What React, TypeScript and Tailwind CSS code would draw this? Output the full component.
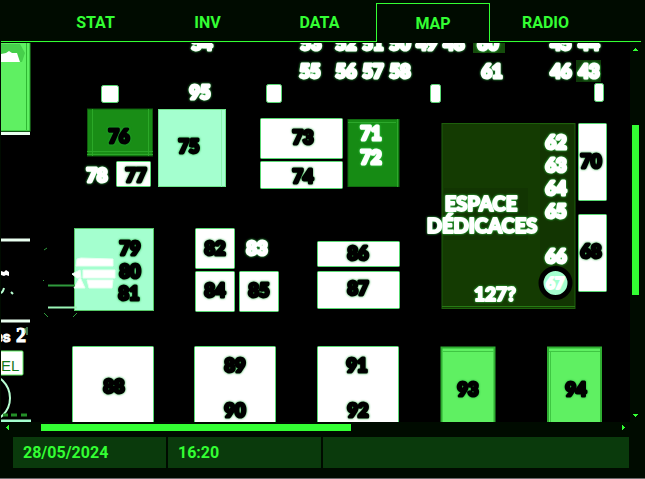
import React, { useState } from "react";

const TABS = ["STAT", "INV", "DATA", "MAP", "RADIO"];

type Label = [text: string, x: number, y: number];

// Booth boxes: x, y, width, height
const WHITE_BOXES: number[][] = [
  [116, 161, 35, 26],
  [260, 118, 83, 41],
  [260, 161, 83, 28],
  [578, 123, 29, 78],
  [578, 214, 29, 78],
  [195, 228, 40, 41],
  [195, 271, 40, 41],
  [239, 271, 40, 41],
  [317, 241, 83, 26],
  [317, 271, 83, 38],
  [72, 346, 82, 90],
  [194, 346, 82, 90],
  [317, 346, 82, 90],
];

const PILLARS: number[][] = [
  [101, 85, 18, 18],
  [266, 84, 16, 19],
  [430, 84, 11, 19],
  [594, 83, 10, 19],
];

const WHITE_LABELS: Label[] = [
  ["54", 202, 50],
  ["53", 311, 50],
  ["52", 346, 50],
  ["51", 373, 50],
  ["50", 400, 50],
  ["49", 427, 50],
  ["48", 454, 50],
  ["60", 488, 50],
  ["45", 561, 50],
  ["44", 589, 50],
  ["55", 310, 78],
  ["56", 346, 78],
  ["57", 373, 78],
  ["58", 400, 78],
  ["61", 492, 78],
  ["46", 561, 78],
  ["43", 589, 78],
  ["95", 200, 99],
  ["78", 97, 182],
  ["71", 371, 140],
  ["72", 371, 164],
  ["62", 556, 149],
  ["63", 556, 172],
  ["64", 556, 195],
  ["65", 556, 218],
  ["66", 556, 263],
  ["83", 257, 255],
];

const BLACK_LABELS: Label[] = [
  ["76", 119, 143],
  ["75", 189, 153],
  ["77", 136, 182],
  ["73", 303, 144],
  ["74", 303, 183],
  ["70", 591, 168],
  ["68", 591, 258],
  ["79", 130, 255],
  ["80", 130, 278],
  ["81", 129, 300],
  ["82", 215, 255],
  ["84", 215, 297],
  ["85", 259, 297],
  ["86", 358, 260],
  ["87", 358, 295],
  ["88", 114, 393],
  ["89", 235, 372],
  ["90", 235, 417],
  ["91", 357, 372],
  ["92", 358, 417],
  ["93", 468, 396],
  ["94", 576, 396],
];

function Labels({ items }: { items: Label[] }) {
  return (
    <>
      {items.map(([text, x, y]) => (
        <text key={text} x={x} y={y}>
          {text}
        </text>
      ))}
    </>
  );
}

function FloorPlan() {
  return (
    <svg
      viewBox="1 43 629 379"
      className="block h-auto w-full bg-black"
      role="img"
      aria-label="Floor plan"
    >
      {/* left edge */}
      <rect x="-10" y="36" width="40" height="95" fill="#5ff062" stroke="#27a52a" />
      <path d="M26.500 43V130" stroke="#2fb833" />
      <path d="M1 44h19l5 9-3 9H1z" fill="#46cf4b" />
      <path d="M1 54l5-1 3-2 3 2 5 0 3 9H1z" fill="#fff" />
      <g stroke="#eafff0" strokeWidth="3">
        <path d="M1 133.500H30M1 240H30M1 321H30" />
      </g>
      <path d="M1 421H31" stroke="#a4ffcf" strokeWidth="3" />
      <path d="M1 271l3 1 2-2 3 2v4l-3-1-2 1-3-1z" fill="#fff" />
      <path d="M4 288q-1 4-3 5M11 292l2 2" stroke="#b8ffd2" strokeWidth="2" fill="none" />
      <rect x="-6" y="351" width="29" height="24" rx="1" fill="#fff" stroke="#5ff062" />
      <circle cx="-14" cy="398" r="24" fill="none" stroke="#b8ffd2" strokeWidth="2" />
      <path d="M3 415h5M11 415h6M21 415h6" stroke="#238e27" strokeWidth="3" />
      <text x="1" y="342" fontSize="14" fontWeight="700" fill="#fff" stroke="#fff">
        <tspan x="-5" fontFamily="'Liberation Sans', sans-serif">es</tspan>
        <tspan x="16" fontSize="20" fontFamily="'Liberation Serif', serif">2</tspan>
      </text>
      <path d="M25 328v5M27 327v8" stroke="#7ee694" />
      <text x="1" y="371" fontSize="15" fontWeight="400" fontFamily="'Liberation Sans', sans-serif" fill="#147a1c">
        EL
      </text>

      {/* coloured booths */}
      <rect x="87.500" y="109" width="65" height="47" fill="#198d16" stroke="#0f5e0d" />
      <path d="M92.500 109V156M148.500 109V156M87 151.500H153M87 154.500H153" stroke="#2ba828" fill="none" />
      <rect x="158.500" y="109.500" width="67" height="77" fill="#a4ffcf" stroke="#6fe58d" />
      <path d="M221.500 110V187" stroke="#86f3ac" />
      <rect x="348" y="119.500" width="51" height="67" fill="#168b14" stroke="#116b10" />
      <path d="M348 122.500H396M397.500 119V187" stroke="#2da82c" fill="none" />
      <rect x="74.500" y="228.500" width="79" height="82" fill="#a4ffcf" stroke="#55c767" />
      <path
        d="M77 259l4-1 32 1v7H76zM72 274l8-4 1 8-4 0zM83 270l32 0v8H83zM74 288l6-11 5 11zM87 280l26 0-1 8H89z"
        fill="#fff"
        stroke="#e8fff2"
      />
      <rect x="441.500" y="347.500" width="53" height="90" fill="#5ff062" stroke="#2fae32" strokeWidth="2" />
      <rect x="548" y="347.500" width="53" height="90" fill="#5ff062" stroke="#2fae32" strokeWidth="2" />
      <path d="M443 351.500H494M549 351.500H600M550.500 352V422" stroke="#3fc643" fill="none" />

      {/* outline beside booth 79 */}
      <g stroke="#2f9a3c" strokeWidth="2" fill="none">
        <path d="M48 285.500h27" />
        <path d="M48 307.500h29" stroke="#9bf5b6" />
        <path d="M44 250l3-2M43 281l1-1M44 313l4 4M73 317l4-4" strokeWidth="1" />
      </g>

      {/* signing area */}
      <rect x="442" y="123.500" width="133" height="185" fill="#143b02" stroke="#1d5f0c" />
      <rect x="540" y="125" width="34" height="182" fill="#123502" />
      <path d="M444 188h84v52h-84z" fill="#123502" />
      <path d="M442 306.500H575" stroke="#267a14" />
      <rect x="473" y="43" width="32" height="10" fill="#154d0c" />
      <rect x="576" y="60" width="25" height="22" fill="#0f3b0a" />

      <g fill="#fff" stroke="#58d873">
        {WHITE_BOXES.map(([x, y, w, h]) => (
          <rect key={`${x}-${y}`} x={x + 0.5} y={y + 0.5} width={w - 1} height={h - 1} rx="1" />
        ))}
        {PILLARS.map(([x, y, w, h]) => (
          <rect key={`${x}-${y}`} x={x + 0.5} y={y + 0.5} width={w - 1} height={h - 1} rx="2" />
        ))}
      </g>

      <circle cx="555.500" cy="283" r="14.500" fill="#a4ffcf" stroke="#000" strokeWidth="5" />

      <g
        fontFamily="Lato, 'Open Sans', sans-serif"
        fontSize="18"
        fontWeight="900"
        textAnchor="middle"
        strokeWidth="3"
        strokeLinejoin="round"
      >
        <g fill="#fff" stroke="#fff" className="drop-shadow-[0_0_1px_#35d94f]">
          <Labels items={WHITE_LABELS} />
          <text x="481" y="211" fontSize="20" strokeWidth="2">ESPACE</text>
          <text x="482" y="233" fontSize="20" strokeWidth="2">DÉDICACES</text>
          <text x="495" y="301" fontSize="19" strokeWidth="2">127?</text>
        </g>
        <text x="555" y="289" fontSize="16" fill="#fff" stroke="#fff" strokeWidth="2">67</text>
        <g fill="#000" stroke="#000" className="drop-shadow-[0_0_1px_#1fae3a]">
          <Labels items={BLACK_LABELS} />
        </g>
      </g>
    </svg>
  );
}

function ScrollButton({ label, points, className }: { label: string; points: string; className: string }) {
  return (
    <button type="button" aria-label={label} className={`flex shrink-0 items-center justify-center ${className}`}>
      <svg viewBox="0 0 5 5" className="size-[5px]" shapeRendering="crispEdges">
        <polygon points={points} fill="#33ff33" />
      </svg>
    </button>
  );
}

export default function App() {
  const [active, setActive] = useState("MAP");

  return (
    <div className="border-b border-[#6b6b6b] bg-[#000b00] pr-1 pl-px font-[Roboto,sans-serif] text-base font-bold text-[#33ff33]">
      <nav className="flex pt-[3px]" aria-label="Sections">
        <div className="flex-1 border-b border-[#33ff33]" />
        {TABS.map((tab) => (
          <button
            key={tab}
            type="button"
            aria-current={tab === active ? "page" : undefined}
            onClick={() => setActive(tab)}
            className={
              tab === active
                ? "h-[39px] w-[114px] border-x border-t border-[#33ff33] pt-px"
                : "h-[39px] w-28 border-b border-[#33ff33] pt-px pr-px"
            }
          >
            {tab}
          </button>
        ))}
        <div className="flex-1 border-b border-[#33ff33]" />
      </nav>

      <main className="mt-px grid grid-cols-[1fr_11px]">
        <FloorPlan />
        <div className="flex flex-col px-[2px]">
          <ScrollButton label="Scroll up" points="2,1 3,1 5,4 0,4" className="h-[13px]" />
          <div className="grow-[69]" />
          <div className="grow-[170] bg-[#33ff33]" />
          <div className="grow-[114]" />
          <ScrollButton label="Scroll down" points="0,1 5,1 3,4 2,4" className="h-[13px]" />
        </div>
        <div className="flex h-[11px] py-[2px]">
          <ScrollButton label="Scroll left" points="1,2 1,3 4,5 4,0" className="w-[13px]" />
          <div className="grow-[27]" />
          <div className="grow-[310] bg-[#33ff33]" />
          <div className="grow-[266]" />
          <ScrollButton label="Scroll right" points="1,0 4,2 4,3 1,5" className="w-[13px]" />
        </div>
      </main>

      <footer className="mx-3 mt-1 grid grid-cols-[1fr_1fr_2fr] gap-[2px] pb-[10px]">
        <div className="h-[31px] bg-[#0a3a0c] px-[10px] leading-[31px]">28/05/2024</div>
        <div className="h-[31px] bg-[#0a3a0c] px-[10px] leading-[31px]">16:20</div>
        <div className="h-[31px] bg-[#0a3a0c]" />
      </footer>
    </div>
  );
}
